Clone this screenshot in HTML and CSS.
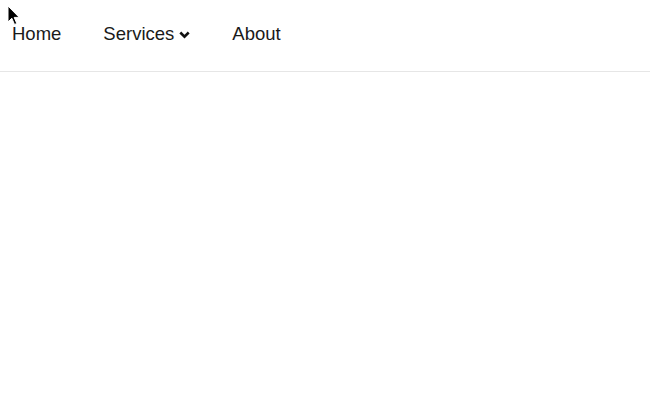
FILE: index.html
```html
<!DOCTYPE html>
<html lang="en">
<head>
    <meta charset="UTF-8">
    <title>Nav</title>
    <link rel="stylesheet" href="styles.css">
</head>
<body>
<nav class="navbar">
    <a class="navItem" href="#">Home</a>
    <a class="navItem" href="#">Services
        <svg class="chevron" width="11" height="8" viewBox="0 0 11 8"><path d="M1.3 1.5 L5.5 5.7 L9.7 1.5" fill="none" stroke="#111" stroke-width="2.6"/></svg>
    </a>
    <a class="navItem" href="#">About</a>
</nav>
<svg class="cursor" width="14" height="22" viewBox="0 0 14 22"><path d="M1 1 L1 17 L4.8 13.2 L7.5 19.5 L9.8 18.5 L7.2 12.4 L12.2 12.4 Z" fill="#000" stroke="#fff" stroke-width="1"/></svg>
</body>
</html>
```

FILE: styles.css
```css
body{
    margin: 0;
    background-color: #fff;
    font-family: "Liberation Sans", Arial, sans-serif;
}
.navbar{
    display: flex;
    align-items: center;
    gap: 42px;
    height: 72px;
    padding-left: 12px;
    padding-bottom: 3px;
    box-shadow: 0 2px 3px rgba(0,0,0,0.08);
    border-bottom: 1px solid #e6e6e6;
    box-sizing: border-box;
}
.navItem{
    display: flex;
    align-items: center;
    gap: 5px;
    font-size: 18.5px;
    color: #1a1a1a;
    text-decoration: none;
}
.chevron{
    margin-top: 2px;
}
.cursor{
    position: absolute;
    left: 7px;
    top: 5px;
}
```
